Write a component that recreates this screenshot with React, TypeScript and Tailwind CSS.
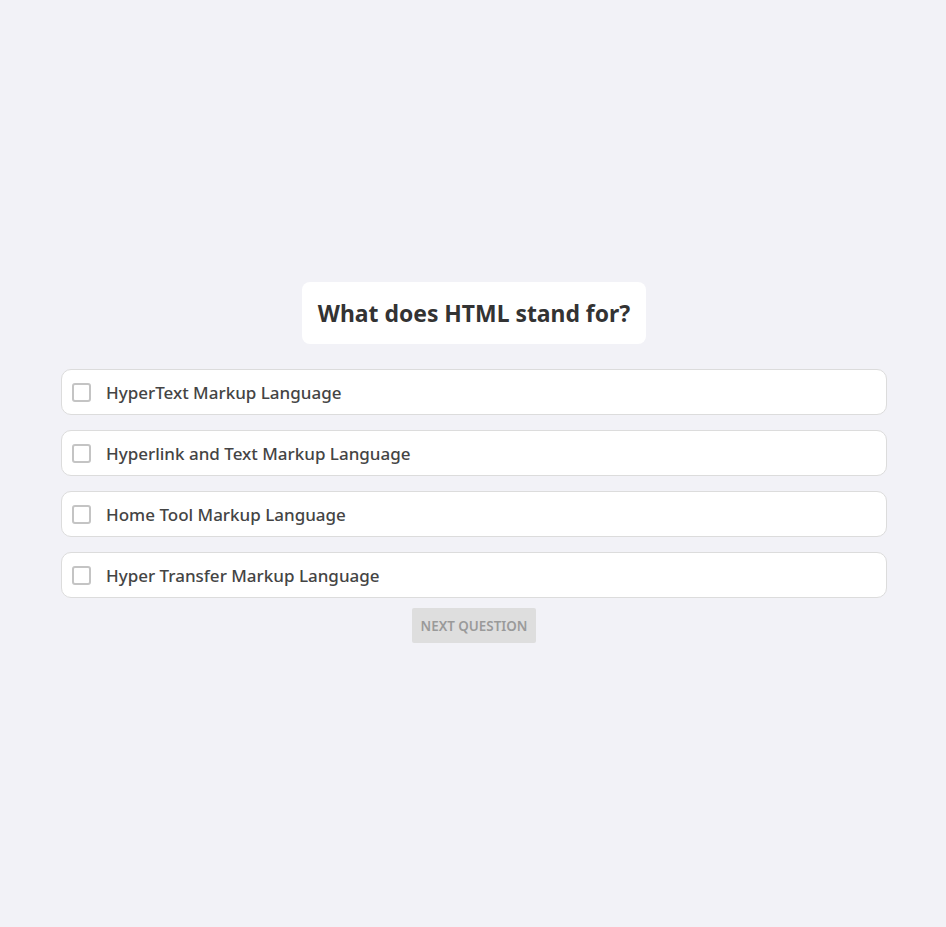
const options = [
  "HyperText Markup Language",
  "Hyperlink and Text Markup Language",
  "Home Tool Markup Language",
  "Hyper Transfer Markup Language",
];

const App = () => {
  return (
    <div
      className="min-h-[927px] bg-[#f2f2f7] flex flex-col items-center justify-center pl-[61px] pr-[59px] pb-[2px]"
      style={{ fontFamily: '"Noto Sans", "Open Sans", sans-serif' }}
    >
      {/* Question */}
      <div className="bg-white rounded-lg px-4 h-[62px] flex items-center pt-[3px]">
        <h1 className="text-[22.9px] font-bold text-[#333]">What does HTML stand for?</h1>
      </div>

      {/* Answers */}
      <div className="w-full mt-[25px] flex flex-col gap-[15px]">
        {options.map((opt) => (
          <label
            key={opt}
            className="h-[46px] bg-white border border-[#dcdcdc] rounded-[10px] flex items-center pl-[10px] cursor-pointer"
          >
            <span className="w-[19px] h-[19px] border-2 border-[#c4c4c4] rounded-[3px] shrink-0" />
            <span className="ml-[15px] pt-[2px] text-[17px] font-medium text-[#444]">{opt}</span>
          </label>
        ))}
      </div>

      {/* Next */}
      <button
        disabled
        className="mt-[10px] w-[124px] h-[35px] pt-[1px] bg-[#dedede] text-[#9a9a9a] text-[13.4px] font-semibold uppercase rounded-[2px]"
      >
        Next Question
      </button>
    </div>
  );
};

export default App;
